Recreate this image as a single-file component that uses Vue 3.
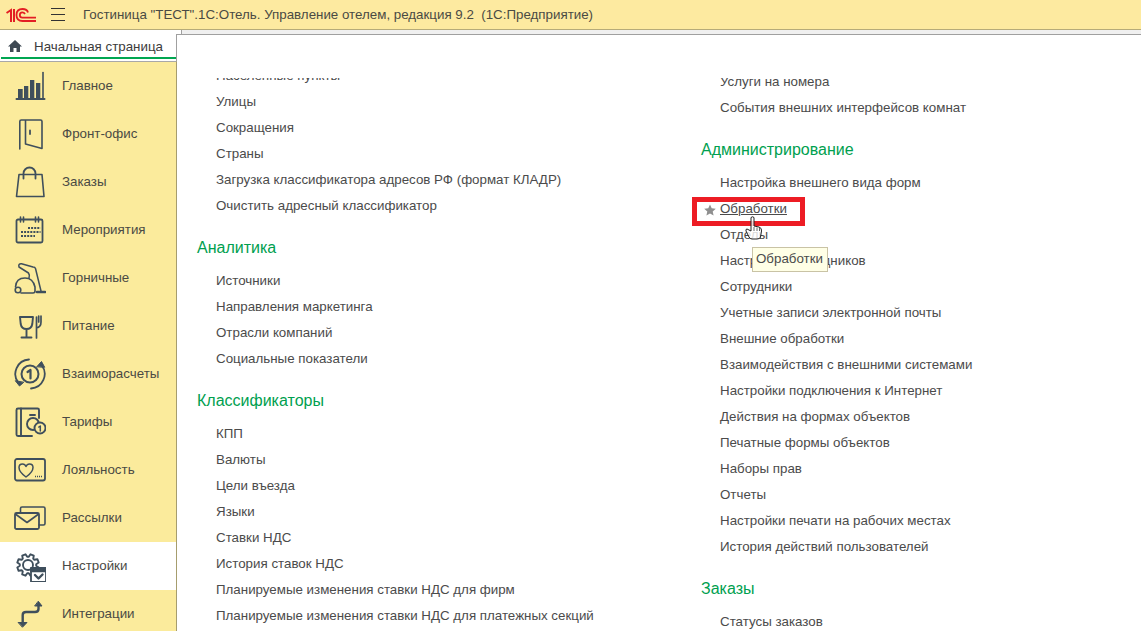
<script setup>
const appTitle = 'Гостиница "ТЕСТ".1С:Отель. Управление отелем, редакция 9.2  (1С:Предприятие)'
const gearPath = (() => {
  const pts = []
  const cx = 14
  const cy = 15
  for (let i = 0; i < 8; i++) {
    const a = (i * Math.PI) / 4 + Math.PI / 8
    for (const [da, r] of [[-0.3, 8.2], [-0.16, 11], [0.16, 11], [0.3, 8.2]]) {
      pts.push(`${(cx + r * Math.cos(a + da)).toFixed(1)} ${(cy + r * Math.sin(a + da)).toFixed(1)}`)
    }
  }
  return 'M' + pts.join('L') + 'Z'
})()
const nav = [
  { label: 'Главное', icon: 'chart' },
  { label: 'Фронт-офис', icon: 'door' },
  { label: 'Заказы', icon: 'bag' },
  { label: 'Мероприятия', icon: 'cal' },
  { label: 'Горничные', icon: 'vac' },
  { label: 'Питание', icon: 'food' },
  { label: 'Взаиморасчеты', icon: 'cycle' },
  { label: 'Тарифы', icon: 'tariff' },
  { label: 'Лояльность', icon: 'heart' },
  { label: 'Рассылки', icon: 'mail' },
  { label: 'Настройки', icon: 'gear', active: true },
  { label: 'Интеграции', icon: 'arrows' }
]
const left = [
  { items: ['Населенные пункты', 'Улицы', 'Сокращения', 'Страны', 'Загрузка классификатора адресов РФ (формат КЛАДР)', 'Очистить адресный классификатор'] },
  { title: 'Аналитика', items: ['Источники', 'Направления маркетинга', 'Отрасли компаний', 'Социальные показатели'] },
  { title: 'Классификаторы', items: ['КПП', 'Валюты', 'Цели въезда', 'Языки', 'Ставки НДС', 'История ставок НДС', 'Планируемые изменения ставки НДС для фирм', 'Планируемые изменения ставки НДС для платежных секций'] }
]
const right = [
  { items: ['Услуги на номера', 'События внешних интерфейсов комнат'] },
  { title: 'Администрирование', items: ['Настройка внешнего вида форм', 'Обработки', 'Отделы', 'Настройки сотрудников', 'Сотрудники', 'Учетные записи электронной почты', 'Внешние обработки', 'Взаимодействия с внешними системами', 'Настройки подключения к Интернет', 'Действия на формах объектов', 'Печатные формы объектов', 'Наборы прав', 'Отчеты', 'Настройки печати на рабочих местах', 'История действий пользователей'] },
  { title: 'Заказы', items: ['Статусы заказов'] }
]
</script>

<template>
  <div class="app">
    <header class="top">
      <svg class="logo" viewBox="0 0 30 14" width="30" height="14">
        <path d="M.5 5 5 2V14M8 1V14" fill="none" stroke="#e31e24" stroke-width="2"/>
        <path d="M22 4.500Q21 1 16.500 1Q10.500 1 10.500 7Q10.500 13 16.500 13H30" fill="none" stroke="#e31e24" stroke-width="1.800"/>
        <path d="M19 6Q18 4.300 16.300 4.300Q13.800 4.300 13.800 7Q13.800 9.600 16.300 9.600H30" fill="none" stroke="#e31e24" stroke-width="1.800"/>
      </svg>
      <svg class="burger" viewBox="0 0 14 13" width="14" height="13">
        <path d="M0 .5H14M0 6.500H14M0 12.500H14" stroke="#333" stroke-width="1"/>
      </svg>
      <span class="title">{{ appTitle }}</span>
    </header>

    <div class="body">
      <aside class="side">
        <div class="home">
          <svg viewBox="0 0 14 12" width="14" height="12"><path d="M7 0 14 6.500H12V12H8.500V8H5.500V12H2V6.500H0Z" fill="#3f4a54"/></svg>
          <span>Начальная страница</span>
        </div>
        <nav class="nav">
          <div v-for="n in nav" :key="n.label" class="nav-item" :class="{ active: n.active }">
            <svg class="ico" viewBox="0 0 32 32" width="32" height="32" fill="none" stroke="#3f4f5c" stroke-width="1.600" stroke-linecap="round" stroke-linejoin="round">
              <template v-if="n.icon === 'chart'">
                <path d="M2.500 29H30.500" stroke-width="2"/><path d="M29 29V2.500" stroke-width="1.600"/>
                <path d="M4 19h4.700v9H4zM10 16h4.300v12H10zM16 10h4.300v18H16zM22 13h4.300v15H22z" fill="#3f4f5c" stroke="none"/>
              </template>
              <template v-else-if="n.icon === 'door'">
                <path d="M5.800 31V3.500Q5.800 2 7.300 2H26.500Q28 2 28 3.500V30.500L11.500 26V2"/>
                <path d="M16 12.500v3.500" stroke-width="1.800"/>
              </template>
              <template v-else-if="n.icon === 'bag'">
                <path d="M5 8.500H28L30 30.500H2.500Z"/><path d="M9.500 12.500V7.500a6 6 0 0 1 12 0v5" stroke-width="1.800"/>
              </template>
              <template v-else-if="n.icon === 'cal'">
                <rect x="2.500" y="5.500" width="26" height="23" rx="1.500" stroke-width="1.800"/>
                <path d="M6.500 3v5M9.500 3v5M21.500 3v5M24.500 3v5"/>
                <path d="M14 14h12.500M7 18h19.500M7 22h14" stroke-width="2" stroke-dasharray="2 1.100" stroke-linecap="butt"/>
              </template>
              <template v-else-if="n.icon === 'vac'">
                <path d="M27 29 21.500 6.500Q21 5 19 5L7.500 1.800Q4 1.500 5 5L14.500 11Q16 13 15 16" stroke-width="1.500"/>
                <circle cx="4" cy="28" r="2.800" stroke-width="1.600"/>
                <path d="M1.500 25Q2 16 11 16Q19 16 21 25V29Q21 31 19 31H7" stroke-width="1.600"/>
                <path d="M23 30H31" stroke-width="2.600"/>
              </template>
              <template v-else-if="n.icon === 'food'">
                <path d="M6 7H19L18.300 14Q17.500 19 12.500 19Q7.500 19 6.700 14ZM12.500 19V27M7.500 27.500H17.500" stroke-width="1.900"/>
                <path d="M22.500 28V7M27 6V12Q27 17 22.500 18M24.700 6V12" stroke-width="1.700"/>
              </template>
              <template v-else-if="n.icon === 'cycle'">
                <path d="M15 1.500A14.500 14.500 0 0 0 4.500 25" stroke-width="1.800"/>
                <path d="M1.500 23 5.500 28 9.500 24.500Z" fill="#3f4f5c" stroke-width="1"/>
                <path d="M17 30.500A14.500 14.500 0 0 0 27.500 7" stroke-width="1.800"/>
                <path d="M23 8.500 27.500 3.500 30.500 9Z" fill="#3f4f5c" stroke-width="1"/>
                <circle cx="16" cy="16" r="8.500" stroke-width="2"/>
                <path d="M13.500 14 16.500 12V20.500" stroke-width="2.200"/>
              </template>
              <template v-else-if="n.icon === 'tariff'">
                <path d="M25 12V4Q25 2.500 23.500 2.500H4Q2.500 2.500 2.500 4V28.500Q2.500 30 4 30H18" stroke-width="1.900"/>
                <path d="M7 2.500V30M16 9H21" stroke-width="1.900"/>
                <circle cx="19" cy="18" r="6" stroke-width="1.900"/>
                <circle cx="26" cy="22" r="5.500" fill="#fbeb9c" stroke-width="1.900"/>
                <path d="M24.800 21 26.300 20V25" stroke-width="1.500"/>
              </template>
              <template v-else-if="n.icon === 'heart'">
                <rect x="1" y="5" width="30" height="21.500" rx="2" stroke-width="1.800"/>
                <path d="M12 23Q5 18 5 13.500Q5 10 8.500 10Q11 10 12 12.500Q13 10 15.500 10Q19 10 19 13.500Q19 18 12 23Z" stroke-width="1.500"/>
                <path d="M21 22.500h7" stroke-width="1.500" stroke-dasharray="1 1" stroke-linecap="butt"/>
              </template>
              <template v-else-if="n.icon === 'mail'">
                <path d="M6.500 11V6.500Q6.500 5 8 5H29.500Q31 5 31 6.500V21.500Q31 23 29.500 23H25" stroke-width="1.600"/>
                <rect x="1" y="11" width="24" height="16" rx="1.500" stroke-width="1.800"/>
                <path d="M2 12.500 13 20.500 24 12.500" stroke-width="1.600"/>
              </template>
              <template v-else-if="n.icon === 'gear'">
                <path :d="gearPath" stroke-width="1.900"/>
                <circle cx="14" cy="15" r="5" stroke-width="1.900"/>
                <rect x="17" y="18" width="15" height="14" fill="#fff" stroke-width="1.800"/>
                <path d="M17 18H32V21.500H17Z" fill="#3f4f5c"/>
                <path d="M21 25 24.500 28.500 28.500 24.500" stroke-width="2.400"/>
              </template>
              <template v-else>
                <path d="M8.700 24V17Q8.700 14 12 14H21Q24.500 14 24.500 11V8" stroke-width="2.400" stroke-linecap="butt"/>
                <path d="M4.500 24.500H13L8.700 29ZM21 8H28L24.500 3.500Z" fill="#3f4f5c" stroke-width="1"/>
              </template>
            </svg>
            <span class="nav-label">{{ n.label }}</span>
          </div>
        </nav>
      </aside>

      <main class="pane">
        <div class="scroll">
          <div class="col col-left">
            <section v-for="(s, i) in left" :key="i">
              <h2 v-if="s.title">{{ s.title }}</h2>
              <div v-for="t in s.items" :key="t" class="row">{{ t }}</div>
            </section>
          </div>
          <div class="col col-right">
            <section v-for="(s, i) in right" :key="i">
              <h2 v-if="s.title">{{ s.title }}</h2>
              <div v-for="t in s.items" :key="t" class="row" :class="{ hot: t === 'Обработки' }">
                <template v-if="t === 'Обработки'">
                  <svg class="star" viewBox="0 0 12 12" width="12" height="12"><path d="M6 .500 7.700 4.300 11.800 4.700 8.700 7.400 9.600 11.500 6 9.400 2.400 11.500 3.300 7.400 .200 4.700 4.300 4.300Z" fill="#8f8f8f"/></svg>
                  <u>{{ t }}</u>
                  <span class="mark"></span>
                  <svg class="hand" viewBox="0 0 18 24" width="18" height="24"><path d="M6 1.500Q7.500 0 9 1.500V10L14 11Q17 12 16.500 15L15.500 21Q15 23 12 23H7Q5 23 4 21L1 15Q.500 13 2 13L6 15Z" fill="#fff" fill-opacity=".8" stroke="#222" stroke-width="1"/><path d="M9 11V15M12 11.500V15M14.500 12V15" stroke="#222" stroke-width=".700"/></svg>
                  <span class="tip">Обработки</span>
                </template>
                <template v-else>{{ t }}</template>
              </div>
            </section>
          </div>
        </div>
      </main>
    </div>
  </div>
</template>

<style>
html, body { margin: 0; padding: 0; background: #fff; overflow: hidden; }
</style>

<style scoped>
.app { width: 1141px; height: 631px; display: flex; flex-direction: column; overflow: hidden; font-family: "Liberation Sans", Arial, sans-serif; font-size: 13.33px; color: #4b4b4b; }
.top { height: 29px; flex: none; background: #fdeaa0; border-bottom: 1px solid #b6ab79; display: flex; align-items: center; padding-left: 6px; }
.logo { flex: none; }
.burger { margin-left: 15px; flex: none; }
.title { margin-left: 18px; color: #4a4a44; white-space: pre; }
.body { flex: 1; display: flex; min-height: 0; background: #f0f0f0; }
.side { width: 176px; flex: none; display: flex; flex-direction: column; background: #fff; min-height: 0; }
.home { flex: none; height: 29px; box-sizing: border-box; display: flex; align-items: center; gap: 12px; padding: 5px 0 0 7px; border-bottom: 2px solid #00a651; margin-left: 1px; color: #3c3c3c; background: #fff; }
.nav { flex: 1; min-height: 0; overflow: hidden; width: 177px; box-sizing: border-box; background: #fbeb9c; margin-top: 2px; border-top: 1px solid #a8a8a8; border-right: 1px solid #a69d6e; position: relative; z-index: 1; }
.nav-item { height: 48px; display: flex; align-items: center; padding-left: 14px; gap: 16px; color: #4a4a44; }
.nav-item.active { background: #fff; }
.nav-label { padding-bottom: 2px; }
.ico { flex: none; }
.pane { flex: 1; min-width: 0; margin-top: 4px; background: #fff; border-top: 1px solid #a0a0a0; border-left: 1px solid #a0a0a0; padding-top: 43px; display: flex; box-sizing: border-box; position: relative; }
.pane::before { content: ""; position: absolute; left: -1px; top: -5px; width: 5px; height: 4px; background: #fff; border-right: 1px solid #a0a0a0; }
.scroll { flex: 1; overflow: hidden; display: flex; position: relative; }
.col { flex: none; box-sizing: border-box; }
.col-left { width: 524px; padding-left: 20px; margin-top: -15px; }
.col-right { margin-top: -9px; }
h2 { margin: 19px 0 10px; height: 20px; line-height: 20px; font-size: 16px; font-weight: 400; color: #00a04f; }
.row { height: 26px; line-height: 26px; padding-left: 19px; white-space: nowrap; position: relative; }
.hot u { position: relative; }
.star { position: absolute; left: 3px; top: 8px; }
.mark { position: absolute; left: -9px; top: 1px; width: 103px; height: 19px; border: 5px solid #ed1c24; pointer-events: none; }
.hand { position: absolute; left: 44px; top: 20px; z-index: 1; }
.tip { position: absolute; left: 51px; top: 51px; height: 23px; line-height: 22px; padding: 0 4px 0 3px; background: #ffffe6; border: 1px solid #c9c3a5; z-index: 2; }
</style>
